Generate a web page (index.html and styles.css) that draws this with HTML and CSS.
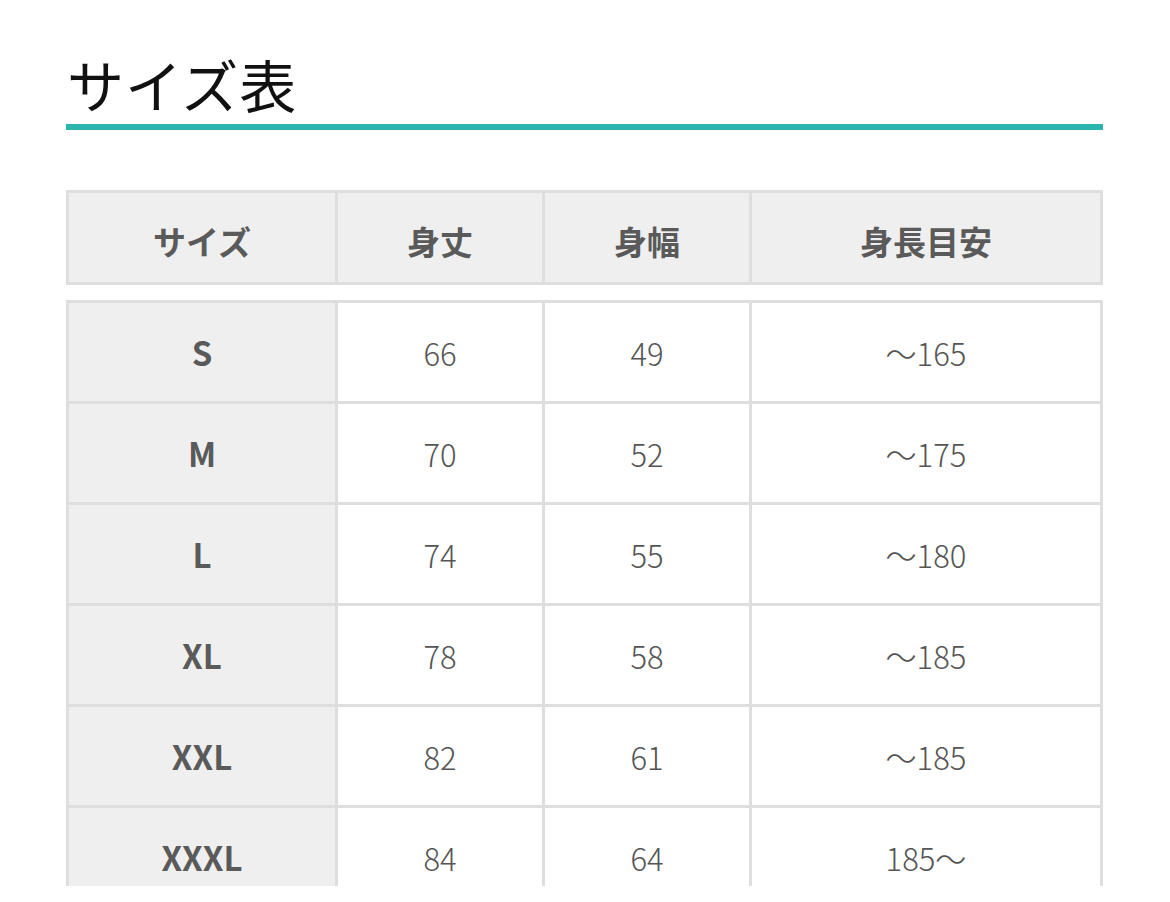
FILE: index.html
```html
<!DOCTYPE html>
<html lang="ja">
<head>
<meta charset="utf-8">
<title>サイズ表</title>
<link rel="stylesheet" href="styles.css">
</head>
<body>
<section class="size-chart">
  <h2 class="title">サイズ表</h2>
  <div class="grid head">
    <div class="cell th">サイズ</div>
    <div class="cell th">身丈</div>
    <div class="cell th">身幅</div>
    <div class="cell th">身長目安</div>
  </div>
  <div class="viewport">
    <div class="grid body">
      <div class="cell sz">S</div><div class="cell td">66</div><div class="cell td">49</div><div class="cell td">〜165</div>
      <div class="cell sz">M</div><div class="cell td">70</div><div class="cell td">52</div><div class="cell td">〜175</div>
      <div class="cell sz">L</div><div class="cell td">74</div><div class="cell td">55</div><div class="cell td">〜180</div>
      <div class="cell sz">XL</div><div class="cell td">78</div><div class="cell td">58</div><div class="cell td">〜185</div>
      <div class="cell sz">XXL</div><div class="cell td">82</div><div class="cell td">61</div><div class="cell td">〜185</div>
      <div class="cell sz">XXXL</div><div class="cell td">84</div><div class="cell td">64</div><div class="cell td">185〜</div>
    </div>
  </div>
</section>
</body>
</html>
```

FILE: styles.css
```css
html, body {
  margin: 0;
  padding: 0;
  background: #ffffff;
}

body {
  font-family: "Noto Sans CJK JP", "Noto Sans", sans-serif;
  color: #555555;
}

.size-chart {
  width: 1037px;
  margin-left: 66px;
  padding-top: 55px;
}

.title {
  margin: 0;
  font-size: 57px;
  line-height: 56px;
  font-weight: 400;
  letter-spacing: 1px;
  color: #111111;
  padding-left: 1px;
  padding-bottom: 13px;
  border-bottom: 6px solid #2cb4ae;
}

.grid {
  display: grid;
  grid-template-columns: 266fr 204fr 204fr 348fr;
  gap: 3px;
  padding: 3px;
  background: #dedede;
}

.head {
  margin-top: 60px;
  grid-auto-rows: 89px;
}

.viewport {
  margin-top: 15px;
  height: 586px;
  overflow: hidden;
}

.body {
  grid-auto-rows: 98px;
}

.cell {
  display: flex;
  align-items: center;
  justify-content: center;
}

.th {
  background: #efefef;
  font-size: 33px;
  font-weight: 700;
  color: #5a5a5a;
  padding-top: 6px;
}

.sz {
  background: #efefef;
  font-size: 33px;
  font-weight: 700;
  color: #5a5a5a;
  padding-top: 0;
}

.td {
  background: #ffffff;
  font-size: 31px;
  font-weight: 300;
  color: #555555;
  padding-top: 0;
}
```
